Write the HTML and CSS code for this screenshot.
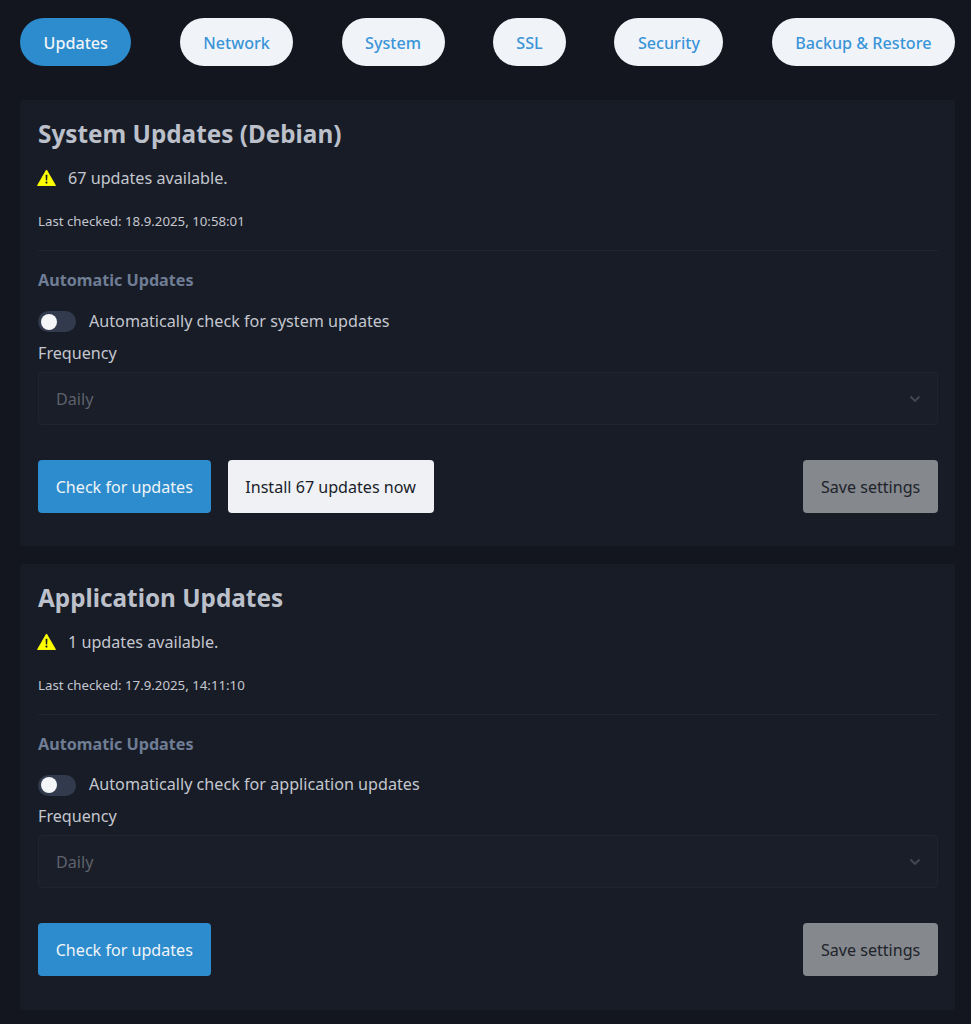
FILE: index.html
```html
<!DOCTYPE html>
<html lang="en">
<head>
<meta charset="utf-8">
<title>Settings</title>
<link rel="stylesheet" href="styles.css">
</head>
<body>
<nav class="tabs">
  <button class="tab tab-active">Updates</button>
  <button class="tab">Network</button>
  <button class="tab">System</button>
  <button class="tab">SSL</button>
  <button class="tab">Security</button>
  <button class="tab">Backup &amp; Restore</button>
</nav>
<section class="card">
  <h2 class="card-title">System Updates (Debian)</h2>
  <p class="status"><svg class="warn" viewBox="0 0 20 18"><path d="M10 1 19.500 17.500H.5Z" fill="#ffff00" stroke="#ffff00" stroke-linejoin="round"/><path d="M9 6h2l-.3 6.200H9.300Z" fill="#1a1e29"/><circle cx="10" cy="14.400" r="1.150" fill="#1a1e29"/></svg>67 updates available.</p>
  <p class="checked">Last checked: 18.9.2025, 10:58:01</p>
  <hr class="divider">
  <h3 class="sub">Automatic Updates</h3>
  <div class="toggle-row"><span class="toggle"><span class="knob"></span></span><span>Automatically check for system updates</span></div>
  <label class="field-label">Frequency</label>
  <div class="select"><span>Daily</span><svg class="chev" viewBox="0 0 12 8"><path d="M1.500 1.500 6 6l4.500-4.500" fill="none" stroke="currentColor" stroke-width="1.800"/></svg></div>
  <div class="actions">
    <button class="btn btn-blue">Check for updates</button>
    <button class="btn btn-light">Install 67 updates now</button>
    <button class="btn btn-save">Save settings</button>
  </div>
</section>
<section class="card">
  <h2 class="card-title">Application Updates</h2>
  <p class="status"><svg class="warn" viewBox="0 0 20 18"><path d="M10 1 19.500 17.500H.5Z" fill="#ffff00" stroke="#ffff00" stroke-linejoin="round"/><path d="M9 6h2l-.3 6.200H9.300Z" fill="#1a1e29"/><circle cx="10" cy="14.400" r="1.150" fill="#1a1e29"/></svg>1 updates available.</p>
  <p class="checked">Last checked: 17.9.2025, 14:11:10</p>
  <hr class="divider">
  <h3 class="sub">Automatic Updates</h3>
  <div class="toggle-row"><span class="toggle"><span class="knob"></span></span><span>Automatically check for application updates</span></div>
  <label class="field-label">Frequency</label>
  <div class="select"><span>Daily</span><svg class="chev" viewBox="0 0 12 8"><path d="M1.500 1.500 6 6l4.500-4.500" fill="none" stroke="currentColor" stroke-width="1.800"/></svg></div>
  <div class="actions">
    <button class="btn btn-blue">Check for updates</button>
    <button class="btn btn-save">Save settings</button>
  </div>
</section>
</body>
</html>
```
FILE: styles.css
```css
* { box-sizing: border-box; }
html, body { margin: 0; }
body {
  background: #13161f;
  color: #c4c7cf;
  font-family: "Noto Sans", sans-serif;
  font-size: 16.15px;
  padding: 18px 16px 0 20px;
  height: 1024px;
  overflow: hidden;
}
.tabs { display: flex; justify-content: space-between; margin-bottom: 34px; }
.tab {
  height: 48px;
  padding: 1px 23.5px 0;
  border: 0;
  border-radius: 24px;
  background: #f0f4f8;
  color: #3a94d8;
  font: 500 16.15px "Noto Sans", sans-serif;
}
.tab-active { background: #2c8ccd; color: #f0f4f8; }
.card {
  background: #181c26;
  border-radius: 4px;
  height: 446px;
  padding: 18px 17px 0 18px;
  margin-bottom: 17.6px;
}
.card-title { margin: 0; font-size: 24.3px; line-height: 32px; font-weight: 700; color: #bcc0ca; }
.status { margin: 16px 0 0; display: flex; align-items: center; line-height: 24px; }
.warn { width: 19px; height: 17px; margin: 0 12px 1px -1px; }
.checked { margin: 21px 0 0; font-size: 13.25px; line-height: 20px; }
.divider { border: 0; border-top: 1px solid #20242f; margin: 19px 0 0; }
.sub { margin: 17px 0 0; font-size: 16.15px; line-height: 24px; font-weight: 700; color: #6f7d95; }
.toggle-row { display: flex; align-items: center; margin-top: 16.5px; line-height: 24px; }
.toggle { width: 38px; height: 21px; border-radius: 11px; background: #323a4d; margin: 2px 13px 0 0; display: flex; align-items: center; padding-left: 2.5px; }
.knob { width: 16px; height: 16px; border-radius: 50%; background: #f4f5f7; }
.field-label { display: block; margin-top: 8px; line-height: 24px; }
.select {
  margin-top: 7px;
  height: 53.4px;
  border: 1px solid #20242f;
  border-radius: 4px;
  padding: 1px 17px 0;
  display: flex;
  align-items: center;
  justify-content: space-between;
  background: #1a1e28;
  color: #5e626c;
}
.chev { width: 12px; height: 8px; color: #434854; margin-right: -1px; }
.actions { display: flex; gap: 17px; margin-top: 35px; }
.btn { height: 53px; padding: 1px 17.7px 0; border: 0; border-radius: 4px; font: 400 16.1px "Noto Sans", sans-serif; }
.btn-blue { background: #2c8ccd; color: #f0f4f8; }
.btn-light { background: #f0f1f5; color: #1a1e29; }
.btn-save { background: #85888d; color: #20232b; margin-left: auto; }
```
